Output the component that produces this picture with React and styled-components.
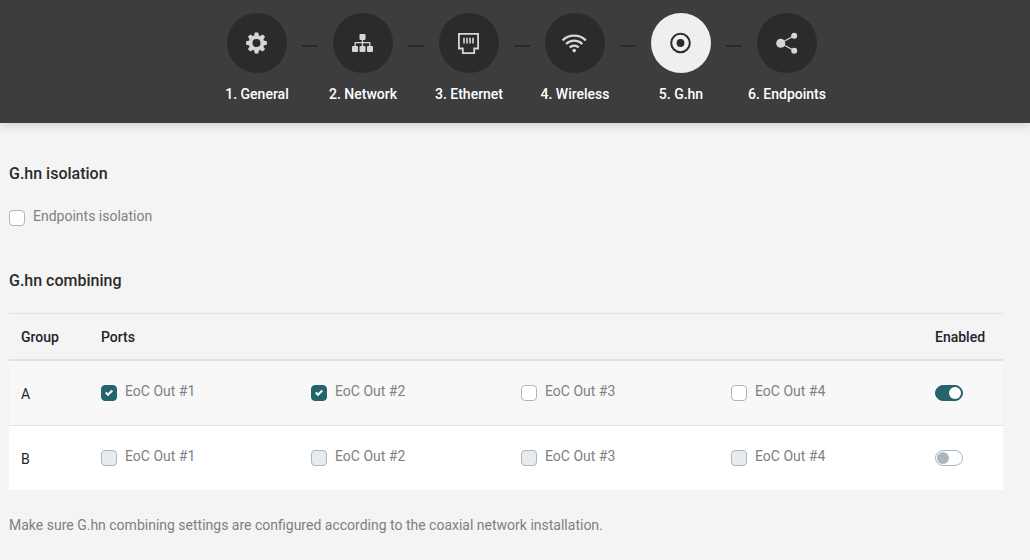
import React, { useState } from "react";
import styled, { createGlobalStyle } from "styled-components";

const GlobalStyle = createGlobalStyle`
  *, *::before, *::after { box-sizing: border-box; }
  body {
    margin: 0;
    background: #f4f4f4;
    color: #212529;
    font: 400 14px/20px Roboto, "Liberation Sans", sans-serif;
  }
`;

const Header = styled.header`
  padding: 13px 0 19px 14px;
  background: #3d3d3d;
  box-shadow: 0 2px 10px rgba(0, 0, 0, 0.16);
`;

const StepList = styled.nav`
  display: flex;
  justify-content: center;
`;

const Connector = styled.span`
  flex: none;
  width: 16px;
  height: 2px;
  margin-top: 32px;
  background: #2b2b2b;
`;

const Step = styled.a`
  display: flex;
  flex: none;
  flex-direction: column;
  align-items: center;
  gap: 11px;
  width: 90px;
  color: #fff;
  font-weight: 500;
  text-decoration: none;
  white-space: nowrap;
`;

const StepCircle = styled.span`
  display: grid;
  place-items: center;
  width: 60px;
  height: 60px;
  border-radius: 50%;
  background: ${(p) => (p.$active ? "#efefef" : "#2b2b2b")};
  color: ${(p) => (p.$active ? "#2b2b2b" : "#d6d6d6")};
`;

const Icon = styled.svg`
  display: block;
  width: 30px;
  height: 30px;
  fill: currentColor;
`;

const Main = styled.main`
  padding: 41px 27px 24px 9px;
`;

const Heading = styled.h2`
  margin: 0;
  color: #2b2b2b;
  font-size: 16px;
  font-weight: 500;
  line-height: 20px;
`;

const Section = styled.section`
  margin-bottom: 45px;
`;

const IsolationRow = styled.div`
  display: flex;
  margin-top: 22px;
`;

const CheckLabel = styled.label`
  display: flex;
  align-items: flex-start;
  gap: 8px;
  color: #808080;
  white-space: nowrap;
`;

const Checkbox = styled.input`
  appearance: none;
  flex: none;
  width: 16px;
  height: 16px;
  margin: 4px 0 0;
  border: 1px solid #adb5bd;
  border-radius: 4px;
  background: #fff center / 8px 8px no-repeat;

  &:disabled { background-color: #e9ecef; }
  &:checked {
    border-color: #25636d;
    background-color: #25636d;
    background-image: url("data:image/svg+xml,%3Csvg xmlns='http://www.w3.org/2000/svg' viewBox='0 0 8 8'%3E%3Cpath fill='%23fff' d='M6.564.75l-3.59 3.612-1.538-1.55L0 4.26l2.974 2.99L8 2.193z'/%3E%3C/svg%3E");
  }
`;

const Toggle = styled.input`
  appearance: none;
  display: block;
  width: 28px;
  height: 16px;
  margin: 4px 0 0;
  padding: 1px;
  border: 1px solid #adb5bd;
  border-radius: 8px;
  background: #fff;

  &::before {
    content: "";
    display: block;
    width: 12px;
    height: 12px;
    border-radius: 50%;
    background: #adb5bd;
  }
  &:checked {
    border-color: #25636d;
    background: #25636d;
  }
  &:checked::before {
    margin-left: 12px;
    background: #fff;
  }
`;

const Table = styled.table`
  width: 100%;
  margin: 22px 0 25px;
  border-collapse: separate;
  border-spacing: 0;
  table-layout: fixed;
`;

const NarrowCol = styled.col`
  width: 80px;
`;

const HeadCell = styled.th`
  height: 48px;
  padding: 0 12px;
  border-top: 1px solid #dee2e6;
  border-bottom: 2px solid #dee2e6;
  font-weight: 500;
  text-align: left;
`;

const Row = styled.tr`
  background: ${(p) => (p.$shaded ? "#f8f8f8" : "#fff")};
`;

const Cell = styled.td`
  height: ${(p) => (p.$last ? 64 : 65)}px;
  padding: 0 12px;
  border-bottom: ${(p) => (p.$last ? "none" : "1px solid #dee2e6")};
`;

const GroupName = styled.span`
  display: block;
  padding-top: 1px;
`;

const Ports = styled.div`
  display: grid;
  grid-template-columns: repeat(4, 210px);
  padding-bottom: 4px;
`;

const ToggleBox = styled.div`
  padding-bottom: 4px;
`;

const Note = styled.p`
  margin: 0;
  color: #808080;
`;

const icons = {
  general: (
    <g transform="translate(14.5 15)">
      <circle r="5.900" fill="none" stroke="currentColor" strokeWidth="3.800" />
      {[0, 45, 90, 135, 180, 225, 270, 315].map((angle) => (
        <path key={angle} d="M-2.500-7L-1.700-10.400H1.700L2.500-7z" transform={`rotate(${angle})`} />
      ))}
    </g>
  ),
  network: (
    <>
      <rect x="11.5" y="6" width="6" height="6" rx="1" />
      <rect x="4" y="18" width="6" height="6" rx="1" />
      <rect x="11.5" y="18" width="6" height="6" rx="1" />
      <rect x="19" y="18" width="6" height="6" rx="1" />
      <path d="M14.500 12v6M7.200 18v-3.300h14.600V18" fill="none" stroke="currentColor" strokeWidth="1.3" />
    </>
  ),
  ethernet: (
    <>
      <path
        d="M4.900 5.900h19.200v14.600h-3.900v4.600h-11.400v-4.600h-3.900z"
        fill="none"
        stroke="currentColor"
        strokeWidth="1.8"
      />
      <path d="M10 9.700v5.800M13 9.700v5.800M16 9.700v5.800M19 9.700v5.800" stroke="currentColor" strokeWidth="1.6" />
    </>
  ),
  wireless: (
    <>
      <g fill="none" stroke="currentColor" strokeWidth="2.400">
        <path d="M2.600 12.400a16.500 16.500 0 0 1 23.200 0" />
        <path d="M6.100 16a11.500 11.500 0 0 1 16.200 0" />
        <path d="M9.700 19.500a6.400 6.400 0 0 1 9 0" />
      </g>
      <circle cx="14.200" cy="22.600" r="1.800" />
    </>
  ),
  ghn: (
    <>
      <circle cx="14.500" cy="15" r="9.300" fill="none" stroke="currentColor" strokeWidth="2" />
      <circle cx="14.500" cy="15" r="3.900" />
    </>
  ),
  endpoints: (
    <>
      <path d="M22.200 7.700L8.700 15l13.500 7.700" fill="none" stroke="currentColor" strokeWidth="1.2" />
      <circle cx="8.700" cy="15.200" r="4.500" />
      <circle cx="22.200" cy="7.700" r="3" />
      <circle cx="22.200" cy="22.700" r="3" />
    </>
  ),
};

const steps = [
  { id: "general", label: "1. General" },
  { id: "network", label: "2. Network" },
  { id: "ethernet", label: "3. Ethernet" },
  { id: "wireless", label: "4. Wireless" },
  { id: "ghn", label: "5. G.hn" },
  { id: "endpoints", label: "6. Endpoints" },
];

const portNames = ["EoC Out #1", "EoC Out #2", "EoC Out #3", "EoC Out #4"];

const initialGroups = [
  { name: "A", ports: [true, true, false, false], enabled: true },
  { name: "B", ports: [false, false, false, false], enabled: false },
];

function CheckField({ label, ...input }) {
  return (
    <CheckLabel>
      <Checkbox type="checkbox" {...input} />
      {label}
    </CheckLabel>
  );
}

export default function App() {
  const [isolated, setIsolated] = useState(false);
  const [groups, setGroups] = useState(initialGroups);

  const update = (index, change) =>
    setGroups((all) => all.map((g, i) => (i === index ? { ...g, ...change(g) } : g)));

  return (
    <>
      <GlobalStyle />
      <Header>
        <StepList aria-label="Setup steps">
          {steps.map(({ id, label }, i) => (
            <React.Fragment key={id}>
              {i > 0 && <Connector />}
              <Step href={`#${id}`} aria-current={id === "ghn" ? "step" : undefined}>
                <StepCircle $active={id === "ghn"}>
                  <Icon viewBox="0 0 30 30" aria-hidden="true">{icons[id]}</Icon>
                </StepCircle>
                {label}
              </Step>
            </React.Fragment>
          ))}
        </StepList>
      </Header>
      <Main>
        <Section>
          <Heading>G.hn isolation</Heading>
          <IsolationRow>
            <CheckField
              label="Endpoints isolation"
              checked={isolated}
              onChange={(e) => setIsolated(e.target.checked)}
            />
          </IsolationRow>
        </Section>
        <Heading>G.hn combining</Heading>
        <Table>
          <colgroup>
            <NarrowCol />
            <col />
            <NarrowCol />
          </colgroup>
          <thead>
            <tr>
              <HeadCell scope="col">Group</HeadCell>
              <HeadCell scope="col">Ports</HeadCell>
              <HeadCell scope="col">Enabled</HeadCell>
            </tr>
          </thead>
          <tbody>
            {groups.map((group, i) => {
              const last = i === groups.length - 1;
              return (
                <Row key={group.name} $shaded={i % 2 === 0}>
                  <Cell $last={last}><GroupName>{group.name}</GroupName></Cell>
                  <Cell $last={last}>
                    <Ports>
                      {portNames.map((port, p) => (
                        <CheckField
                          key={port}
                          label={port}
                          checked={group.ports[p]}
                          disabled={!group.enabled}
                          onChange={(e) => {
                            const value = e.target.checked;
                            update(i, (g) => ({ ports: g.ports.map((v, k) => (k === p ? value : v)) }));
                          }}
                        />
                      ))}
                    </Ports>
                  </Cell>
                  <Cell $last={last}>
                    <ToggleBox>
                      <Toggle
                        type="checkbox"
                        role="switch"
                        aria-label={`Enable group ${group.name}`}
                        checked={group.enabled}
                        onChange={(e) => {
                          const enabled = e.target.checked;
                          update(i, () => ({ enabled }));
                        }}
                      />
                    </ToggleBox>
                  </Cell>
                </Row>
              );
            })}
          </tbody>
        </Table>
        <Note>Make sure G.hn combining settings are configured according to the coaxial network installation.</Note>
      </Main>
    </>
  );
}
